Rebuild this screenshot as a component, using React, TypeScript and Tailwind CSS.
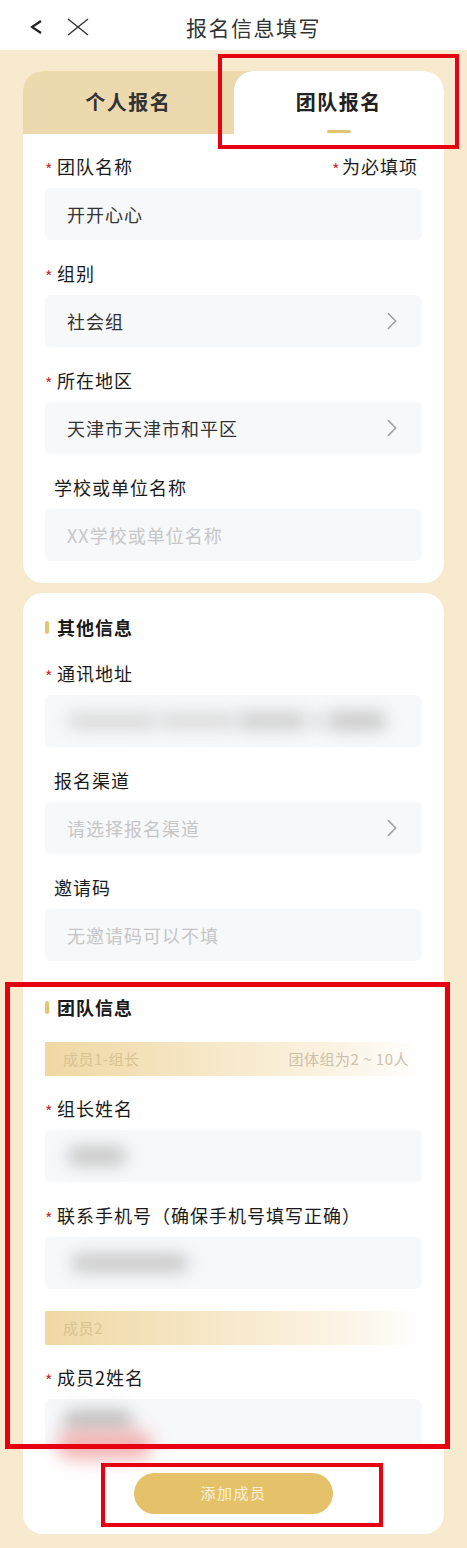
import React from 'react';
import { ChevronRight } from 'lucide-react';

type LabelProps = { text: string; required?: boolean; right?: React.ReactNode };

const Star: React.FC = () => (
  <span className="mt-[5px] w-[12px] text-[16px] leading-none text-[#c0333a]">*</span>
);

const Label: React.FC<LabelProps> = ({ text, required, right }) => (
  <div className="flex h-6 items-center justify-between pl-[22px] pr-[26px]">
    <div className="flex items-center text-[18px] leading-6 tracking-[1px] text-[#1a1a1a]">
      {required ? <Star /> : <span className="w-[9px]" />}
      {text}
    </div>
    {right}
  </div>
);

const Box: React.FC<{ children?: React.ReactNode; arrow?: boolean }> = ({ children, arrow }) => (
  <div className="relative mx-[22px] mt-[10px] flex h-[52px] items-center justify-between rounded-[6px] bg-[#f7f8fa] pl-[22px] pr-[15px]">
    <div className="flex items-center text-[18px] tracking-[1px] text-[#333]">{children}</div>
    {arrow && <ChevronRight size={30} strokeWidth={1.2} className="text-[#9a9a9a]" />}
  </div>
);

const Placeholder: React.FC<{ text: string }> = ({ text }) => (
  <span className="text-[#c6c6c6]">{text}</span>
);

const SectionTitle: React.FC<{ text: string; className?: string }> = ({ text, className }) => (
  <div className={`flex h-6 items-center pl-[22px] ${className ?? ''}`}>
    <span className="mr-[8px] h-[13px] w-[4px] rounded-full bg-[#e2c56f]" />
    <span className="text-[18px] font-bold tracking-[1px] text-[#1a1a1a]">{text}</span>
  </div>
);

const Band: React.FC<{ left: string; right?: string; className?: string }> = ({ left, right, className }) => (
  <div
    className={`mx-[22px] flex h-[34px] items-center justify-between bg-linear-to-r from-[#efd8a3] via-[#fbf2e1] via-75% to-white pl-[18px] pr-[13px] text-[15px] tracking-[0.5px] ${className ?? ''}`}
  >
    <span className="text-[#d9c391]">{left}</span>
    {right && <span className="text-[#cdc2ad]">{right}</span>}
  </div>
);

const Blob: React.FC<{ className: string }> = ({ className }) => (
  <div className={`rounded-full blur-[8px] ${className}`} />
);

export default function App() {
  return (
    <div className="relative w-[467px] min-h-[1548px] bg-[#f8eace] pb-[14px] font-['Noto_Sans_CJK_SC','Noto_Sans',sans-serif]">
      {/* header */}
      <div className="flex h-[50px] items-center bg-white pt-[4px]">
        <svg width="14" height="16" viewBox="0 0 14 16" className="ml-[29px]">
          <polyline points="12,2 3,8 12,14" fill="none" stroke="#222" strokeWidth="2.2" strokeLinejoin="miter" />
        </svg>
        <svg width="22" height="18" viewBox="0 0 22 18" className="ml-[24px]">
          <line x1="1" y1="1" x2="21" y2="17" stroke="#333" strokeWidth="1.4" />
          <line x1="21" y1="1" x2="1" y2="17" stroke="#333" strokeWidth="1.4" />
        </svg>
        <div className="ml-[97px] text-[21px] leading-7 tracking-[1.5px] text-[#333]">报名信息填写</div>
      </div>

      {/* card 1 */}
      <div className="mx-[23px] mt-[21px] overflow-hidden rounded-[20px] bg-white pb-[22px]">
        <div className="flex h-[63px] bg-[#ecd9ad]">
          <div className="flex flex-1 items-center justify-center pb-[1px] text-[20px] font-bold tracking-[1.5px] text-[#333]">
            个人报名
          </div>
          <div className="flex flex-1 flex-col items-center rounded-t-[20px] bg-white pt-[17px]">
            <span className="text-[20px] font-bold leading-7 tracking-[1.5px] text-[#222]">团队报名</span>
            <span className="mt-[14px] h-[3px] w-[24px] rounded-full bg-[#e2c56f]" />
          </div>
        </div>

        <div className="mt-[20px]">
          <Label
            text="团队名称"
            required
            right={
              <div className="flex items-center text-[18px] leading-6 tracking-[1px] text-[#1a1a1a]">
                <span className="mt-[5px] w-[10px] text-[16px] leading-none text-[#c0333a]">*</span>为必填项
              </div>
            }
          />
          <Box>开开心心</Box>
        </div>
        <div className="mt-[21px]">
          <Label text="组别" required />
          <Box arrow>社会组</Box>
        </div>
        <div className="mt-[21px]">
          <Label text="所在地区" required />
          <Box arrow>天津市天津市和平区</Box>
        </div>
        <div className="mt-[21px]">
          <Label text="学校或单位名称" />
          <Box>
            <Placeholder text="XX学校或单位名称" />
          </Box>
        </div>
      </div>

      {/* card 2 */}
      <div className="mx-[23px] mt-[10px] rounded-[20px] bg-white pb-[20px] pt-[22px]">
        <SectionTitle text="其他信息" />
        <div className="mt-[22px]">
          <Label text="通讯地址" required />
          <Box>
            <div className="flex items-center">
              <Blob className="h-[16px] w-[90px] bg-[#d8d8d8]" />
              <Blob className="h-[16px] w-[80px] bg-[#dadada]" />
              <Blob className="h-[18px] w-[70px] bg-[#d0d0d0]" />
              <Blob className="h-[14px] w-[20px] bg-[#dedede]" />
              <Blob className="h-[20px] w-[60px] bg-[#cbcbcb]" />
            </div>
          </Box>
        </div>
        <div className="mt-[21px]">
          <Label text="报名渠道" />
          <Box arrow>
            <Placeholder text="请选择报名渠道" />
          </Box>
        </div>
        <div className="mt-[21px]">
          <Label text="邀请码" />
          <Box>
            <Placeholder text="无邀请码可以不填" />
          </Box>
        </div>

        <SectionTitle text="团队信息" className="mt-[34px]" />
        <Band left="成员1-组长" right="团体组为2 ~ 10人" className="mt-[23px]" />
        <div className="mt-[20px]">
          <Label text="组长姓名" required />
          <Box>
            <Blob className="h-[20px] w-[60px] bg-[#c8c8c8]" />
          </Box>
        </div>
        <div className="mt-[21px]">
          <Label text="联系手机号（确保手机号填写正确）" required />
          <Box>
            <Blob className="ml-[4px] h-[20px] w-[118px] bg-[#cbcbcb]" />
          </Box>
        </div>
        <Band left="成员2" className="mt-[22px]" />
        <div className="mt-[20px]">
          <Label text="成员2姓名" required />
          <Box>
            <div className="absolute left-[18px] top-[10px] h-[24px] w-[70px] rounded-full bg-[#c4c4c4] blur-[8px]" />
            <div className="absolute left-[12px] top-[32px] h-[28px] w-[95px] rounded-full bg-[#f2b0b0] blur-[9px]" />
          </Box>
        </div>
        <div className="mx-auto mt-[22px] flex h-[41px] w-[199px] items-center justify-center rounded-full bg-[#e5c26a] text-[15px] tracking-[1.5px] text-[#fbf0d8]">
          添加成员
        </div>
      </div>

      {/* annotation frames */}
      <div className="pointer-events-none absolute left-[218px] top-[54px] h-[95px] w-[241px] border-[4px] border-[#e60012]" />
      <div className="pointer-events-none absolute left-[5px] top-[982px] h-[467px] w-[445px] border-[5px] border-[#e60012]" />
      <div className="pointer-events-none absolute left-[101px] top-[1463px] h-[64px] w-[282px] border-[4px] border-[#e60012]" />
    </div>
  );
}
